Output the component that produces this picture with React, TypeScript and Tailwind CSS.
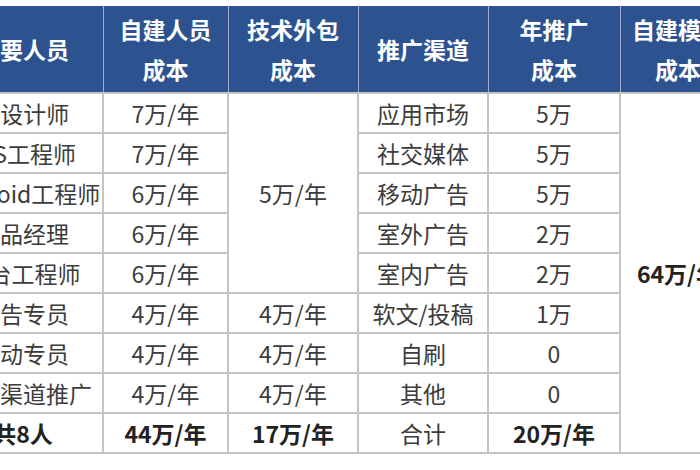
import React from "react";

const staffRows = [
  { role: "UI设计师", own: "7万/年" },
  { role: "iOS工程师", own: "7万/年" },
  { role: "Android工程师", own: "6万/年" },
  { role: "产品经理", own: "6万/年" },
  { role: "后台工程师", own: "6万/年" },
  { role: "广告专员", own: "4万/年", outsource: "4万/年" },
  { role: "活动专员", own: "4万/年", outsource: "4万/年" },
  { role: "线下渠道推广", own: "4万/年", outsource: "4万/年" },
];

const channels = [
  { name: "应用市场", cost: "5万" },
  { name: "社交媒体", cost: "5万" },
  { name: "移动广告", cost: "5万" },
  { name: "室外广告", cost: "2万" },
  { name: "室内广告", cost: "2万" },
  { name: "软文/投稿", cost: "1万" },
  { name: "自刷", cost: "0" },
  { name: "其他", cost: "0" },
];

const cell = "border-2 border-[#c4c4c4] text-center align-middle p-0";
const bold = `${cell} font-bold text-[#222]`;
const head =
  "border-x border-[#9fb0cc] bg-[#2c5290] text-white font-bold text-center align-middle leading-[40px] p-0";

export default function App() {
  return (
    <div className="w-[700px] h-[470px] overflow-hidden bg-white pt-[6px]">
      <table
        className="ml-[-58px] w-[793px] border-collapse table-fixed text-[23px] text-[#3c3c3c]"
        style={{ fontFamily: '"Noto Sans CJK SC", "Noto Sans", sans-serif' }}
      >
        <colgroup>
          <col className="w-[160px]" />
          <col className="w-[125px]" />
          <col className="w-[130px]" />
          <col className="w-[130px]" />
          <col className="w-[132px]" />
          <col className="w-[116px]" />
        </colgroup>
        <thead>
          <tr className="h-[87px]">
            <th className={head}>主要人员</th>
            <th className={head}>
              自建人员
              <br />
              成本
            </th>
            <th className={head}>
              技术外包
              <br />
              成本
            </th>
            <th className={head}>推广渠道</th>
            <th className={head}>
              年推广
              <br />
              成本
            </th>
            <th className={head}>
              自建模式
              <br />
              成本
            </th>
          </tr>
        </thead>
        <tbody>
          {staffRows.map((row, i) => (
            <tr key={row.role} className="h-[40px]">
              <td className={cell}>{row.role}</td>
              <td className={cell}>{row.own}</td>
              {i === 0 && (
                <td className={cell} rowSpan={5}>
                  5万/年
                </td>
              )}
              {i >= 5 && <td className={cell}>{row.outsource}</td>}
              <td className={cell}>{channels[i].name}</td>
              <td className={cell}>{channels[i].cost}</td>
              {i === 0 && (
                <td className={bold} rowSpan={9}>
                  64万/年
                </td>
              )}
            </tr>
          ))}
          <tr className="h-[40px]">
            <td className={bold}>共8人</td>
            <td className={bold}>44万/年</td>
            <td className={bold}>17万/年</td>
            <td className={cell}>合计</td>
            <td className={bold}>20万/年</td>
          </tr>
        </tbody>
      </table>
    </div>
  );
}
